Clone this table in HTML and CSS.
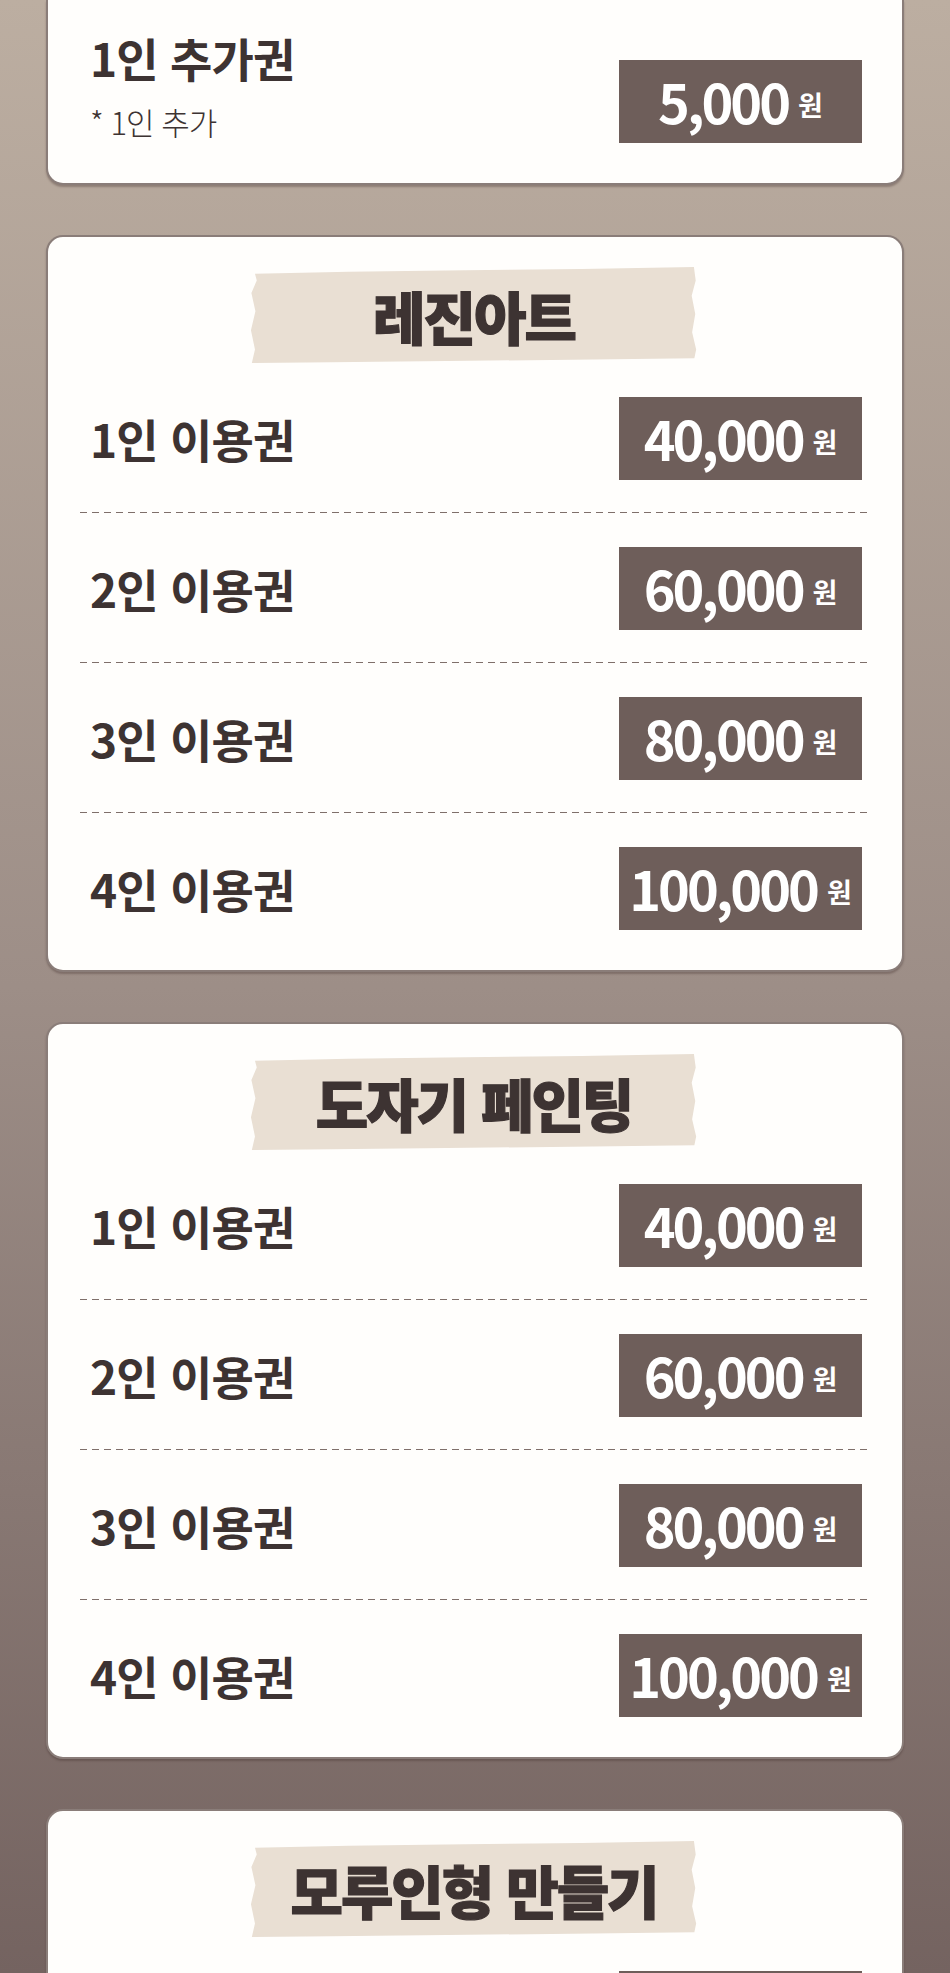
FILE: index.html
```html
<!DOCTYPE html>
<html lang="ko">
<head>
    <meta charset="UTF-8">
    <meta name="viewport" content="width=device-width, initial-scale=1.0">
    <title>체험 이용권 안내</title>
    <link rel="stylesheet" href="styles.css">
</head>
<body>

<main class="menu">

    <!-- 앞 카드의 마지막 줄 (위쪽은 화면 밖) -->
    <section class="card card-cut">
        <ul class="rows">
            <li class="row">
                <div class="item">
                    <p class="item-name">1인 추가권</p>
                    <p class="item-note">* 1인 추가</p>
                </div>
                <div class="price"><span class="amount">5,000</span><span class="unit">원</span></div>
            </li>
        </ul>
    </section>

    <section class="card">
        <h2 class="tape"><span>레진아트</span></h2>
        <ul class="rows">
            <li class="row">
                <p class="item-name">1인 이용권</p>
                <div class="price"><span class="amount">40,000</span><span class="unit">원</span></div>
            </li>
            <li class="row">
                <p class="item-name">2인 이용권</p>
                <div class="price"><span class="amount">60,000</span><span class="unit">원</span></div>
            </li>
            <li class="row">
                <p class="item-name">3인 이용권</p>
                <div class="price"><span class="amount">80,000</span><span class="unit">원</span></div>
            </li>
            <li class="row">
                <p class="item-name">4인 이용권</p>
                <div class="price"><span class="amount">100,000</span><span class="unit">원</span></div>
            </li>
        </ul>
    </section>

    <section class="card">
        <h2 class="tape"><span>도자기 페인팅</span></h2>
        <ul class="rows">
            <li class="row">
                <p class="item-name">1인 이용권</p>
                <div class="price"><span class="amount">40,000</span><span class="unit">원</span></div>
            </li>
            <li class="row">
                <p class="item-name">2인 이용권</p>
                <div class="price"><span class="amount">60,000</span><span class="unit">원</span></div>
            </li>
            <li class="row">
                <p class="item-name">3인 이용권</p>
                <div class="price"><span class="amount">80,000</span><span class="unit">원</span></div>
            </li>
            <li class="row">
                <p class="item-name">4인 이용권</p>
                <div class="price"><span class="amount">100,000</span><span class="unit">원</span></div>
            </li>
        </ul>
    </section>

    <section class="card">
        <h2 class="tape"><span>모루인형 만들기</span></h2>
        <ul class="rows">
            <li class="row">
                <p class="item-name">1인 이용권</p>
                <div class="price"><span class="amount">30,000</span><span class="unit">원</span></div>
            </li>
        </ul>
    </section>

</main>

</body>
</html>
```

FILE: styles.css
```css
body {
    margin: 0;
    padding: 0;
    font-family: "Noto Sans CJK KR", "Noto Sans", sans-serif;
    color: #3d3332;
    background: linear-gradient(to bottom, #bcaea1 0%, #9d8e87 50%, #746360 100%);
    min-height: 1973px;
}
p, ul, h2 {
    margin: 0;
    padding: 0;
}
.menu {
    display: flex;
    flex-direction: column;
    gap: 50px;
    padding: 0 46px;
    height: 1973px;
    overflow: hidden;
    box-sizing: border-box;
}
/* Card */
.card {
    flex-shrink: 0;
    background-color: #fffefc;
    border: 2px solid #8a7d79;
    border-radius: 17px;
    box-shadow: 0 2px 2px rgba(70, 50, 45, 0.35);
    padding: 30px 34px 7px 32px;
}
.card-cut {
    border-top: none;
    border-radius: 0 0 17px 17px;
    padding-top: 26px;
}
/* Torn paper title */
.tape {
    width: 447px;
    height: 96px;
    margin: 0 auto;
    display: flex;
    align-items: center;
    justify-content: center;
    background-color: #e9dfd3;
    clip-path: polygon(1% 7%, 22% 5%, 48% 3.5%, 74% 2%, 99.2% 0%, 99.6% 14%, 98.7% 30%, 99.5% 49%, 98.8% 68%, 99.7% 86%, 99.3% 95%, 72% 96.5%, 44% 98%, 18% 99.3%, 0.3% 100%, 1% 86%, 0.1% 66%, 1.1% 46%, 0.2% 27%, 1.4% 14%);
}
.tape span {
    font-size: 57px;
    font-weight: 900;
    letter-spacing: -2px;
    line-height: 1;
    color: #3d3332;
    -webkit-text-stroke: 1.2px #3d3332;
}
/* Rows */
.rows {
    list-style: none;
}
.row {
    height: 150px;
    box-sizing: border-box;
    display: flex;
    align-items: center;
    justify-content: space-between;
    padding: 0 6px 0 10px;
    background-image: linear-gradient(to right, #7f6f6a 58%, transparent 58%);
    background-size: 12px 1px;
    background-repeat: repeat-x;
    background-position: left bottom;
}
.row:last-child {
    background-image: none;
}
.item-name {
    font-size: 46px;
    font-weight: 700;
    letter-spacing: -0.8px;
    line-height: 1.15;
}
.item-note {
    font-size: 31px;
    font-weight: 300;
    letter-spacing: -1px;
    line-height: 1.3;
    margin-top: 18px;
    color: #3d3332;
}
.card-cut .item {
    margin-bottom: 29px;
}
/* Price tag */
.price {
    width: 243px;
    height: 83px;
    flex-shrink: 0;
    background-color: #6e5e5a;
    color: #fff;
    display: flex;
    align-items: center;
    justify-content: center;
    gap: 10px;
    line-height: 1;
}
.amount {
    font-size: 54px;
    font-weight: 700;
    letter-spacing: -3px;
}
.unit {
    font-size: 27px;
    font-weight: 700;
    margin-top: 6px;
}
```
